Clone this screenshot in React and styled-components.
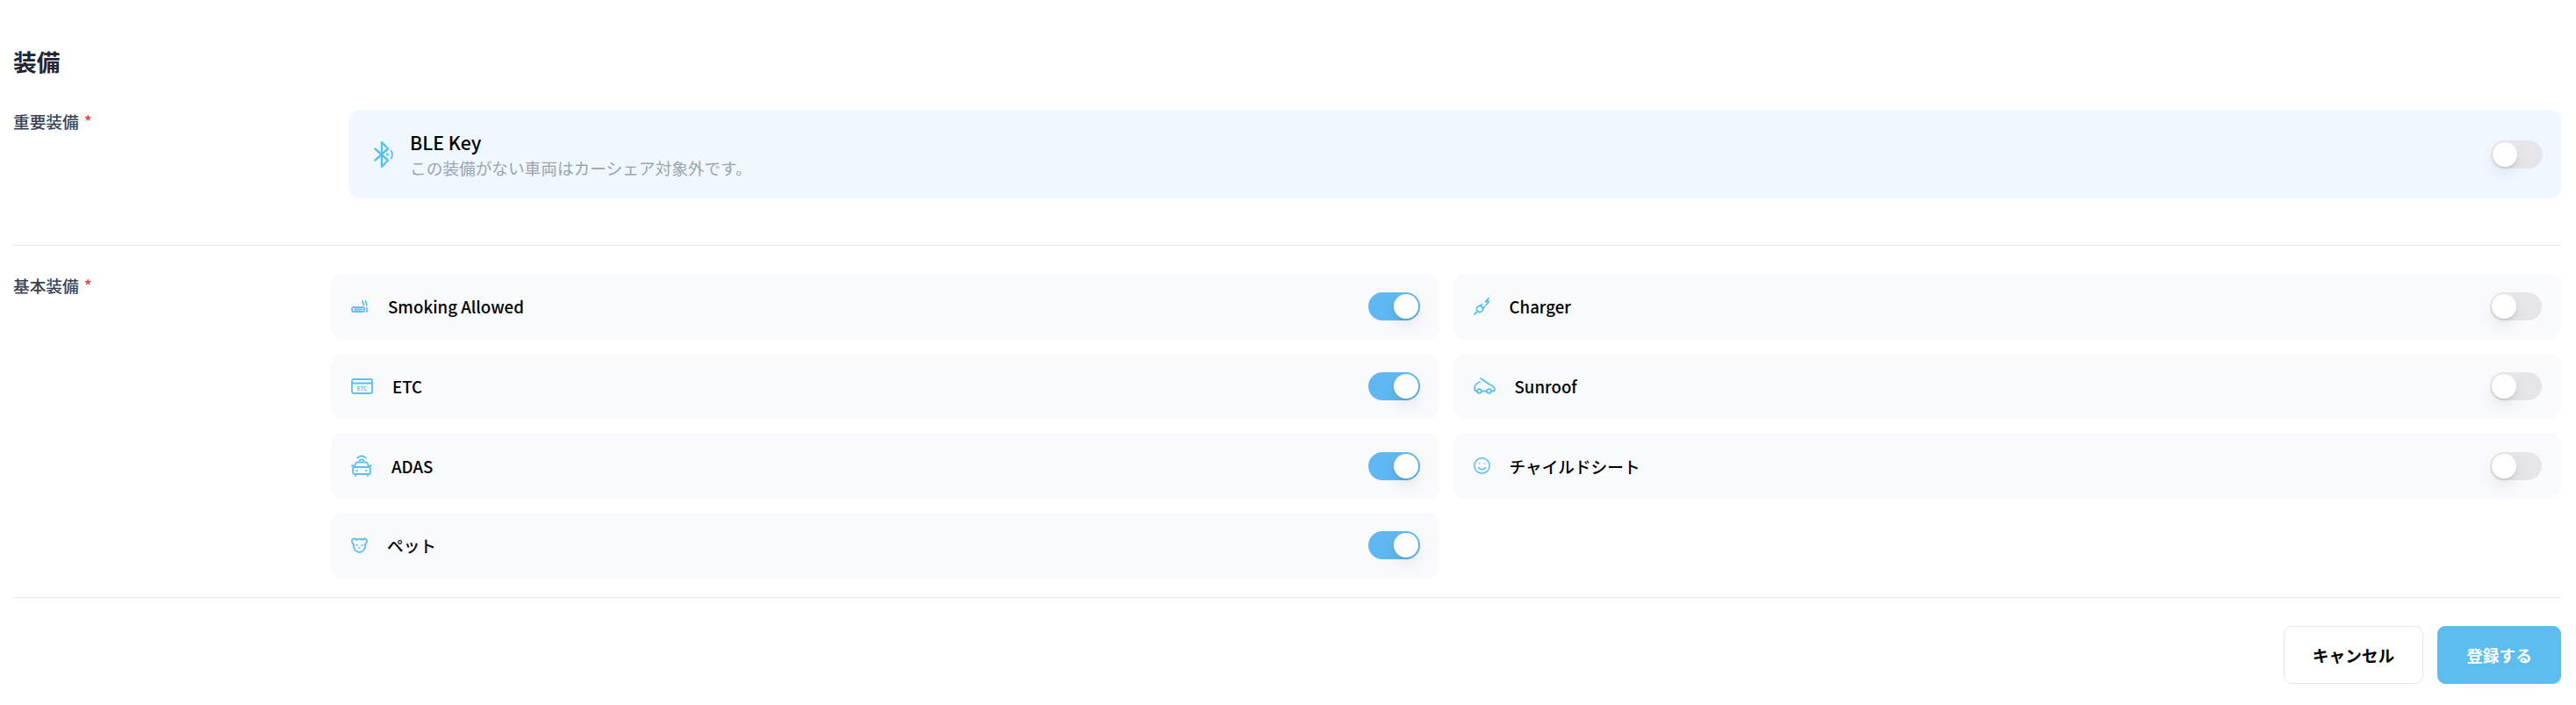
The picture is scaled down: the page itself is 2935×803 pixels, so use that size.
import React from "react";
import styled, { createGlobalStyle } from "styled-components";

const GlobalStyle = createGlobalStyle`
  body {
    margin: 0;
    background: #fff;
    font-family: "Noto Sans CJK JP", "Noto Sans", sans-serif;
    color: #000;
  }
`;

const Page = styled.div`
  padding: 50px 17px 24px 15px;
`;

const Title = styled.h2`
  margin: 0 0 36px;
  font-size: 26.67px;
  line-height: 39px;
  font-weight: 700;
  color: #1f2533;
`;

const FieldRow = styled.section`
  display: grid;
  grid-template-columns: 362px 1fr;
  padding: ${props => props.$pad};
  border-bottom: 1px solid #e7e7eb;
`;

const FieldLabel = styled.div`
  font-size: 18.67px;
  line-height: 26px;
  font-weight: 500;
  color: #374151;
`;

const Required = styled.span`
  color: #e0484d;
  margin-left: 6px;
`;

const KeyCard = styled.div`
  display: flex;
  align-items: center;
  height: 101px;
  margin-left: 20px;
  padding: 0 21px 0 29px;
  border-radius: 14px;
  background: #eff8fe;
`;

const KeyText = styled.div`
  flex: 1;
  margin-left: 18px;
`;

const KeyName = styled.div`
  font-size: 21.33px;
  line-height: 30px;
  font-weight: 500;
`;

const KeyNote = styled.div`
  font-size: 18.67px;
  line-height: 28px;
  color: #9ca3af;
`;

const ItemGrid = styled.div`
  display: grid;
  grid-template-columns: 1fr 1fr;
  grid-auto-rows: 74.67px;
  gap: 16px;
`;

const ItemCard = styled.div`
  display: flex;
  align-items: center;
  padding: 0 22px 0 23px;
  border-radius: 14px;
  background: #f9fafb;
`;

const ItemName = styled.span`
  flex: 1;
  margin-left: 22px;
  font-size: 18.67px;
  line-height: 28px;
  font-weight: 500;
`;

const Track = styled.div`
  display: flex;
  justify-content: ${props => (props.$on ? "flex-end" : "flex-start")};
  flex: none;
  width: 58.67px;
  height: 32px;
  padding: 2px;
  box-sizing: border-box;
  border-radius: 16px;
  background: ${props => (props.$on ? "#5fb8f1" : "#e5e5ea")};
`;

const Knob = styled.div`
  width: 28px;
  height: 28px;
  border-radius: 50%;
  background: #fff;
  box-shadow: 0 8px 16px rgba(0, 0, 0, 0.08), 0 2px 3px rgba(0, 0, 0, 0.08);
`;

const Footer = styled.footer`
  display: flex;
  justify-content: flex-end;
  gap: 16px;
  padding-top: 32px;
`;

const Button = styled.button`
  width: ${props => props.$width}px;
  height: 66px;
  box-sizing: border-box;
  border: 1px solid ${props => (props.$primary ? "#5bbeef" : "#e7e7eb")};
  border-radius: 9px;
  background: ${props => (props.$primary ? "#5bbeef" : "#fff")};
  color: ${props => (props.$primary ? "#fff" : "#000")};
  font-family: inherit;
  font-size: 18.67px;
  font-weight: 700;
`;

const IconSvg = styled.svg`
  flex: none;
  fill: none;
  stroke: #5bbfef;
  stroke-width: ${props => props.$stroke || 1.8};
  stroke-linecap: round;
  stroke-linejoin: round;
`;

const EtcMark = styled.text`
  fill: #5bbfef;
  stroke: none;
  font-size: 6.5px;
  font-weight: 700;
`;

const Bluetooth = () => (
  <IconSvg width="23" height="30" viewBox="0 0 23 30" $stroke={2.4}>
    <path d="M1.5 8.5L16 21.5 9 29V1l7 7.5L1.5 21.5" />
    <path d="M19.5 10.5c2 2.5 2 6.5 0 9" strokeWidth="1.8" />
    <circle cx="15.5" cy="15" r="0.5" />
  </IconSvg>
);

const Smoking = () => (
  <IconSvg width="20" height="14" viewBox="0 0 20 14">
    <rect x="1" y="8" width="14" height="5" rx="2" />
    <path d="M4 10.5h8M17.5 8.5c1.3 1 1.3 3.5 0 4.5M13 1l1.5 4.5M16.5 1L18 5.5" />
  </IconSvg>
);

const Etc = () => (
  <IconSvg width="25" height="18" viewBox="0 0 25 18">
    <rect x="1" y="1" width="23" height="16" rx="2" />
    <path d="M1 5.5h23" />
    <EtcMark x="12.5" y="14.3" textAnchor="middle">ETC</EtcMark>
  </IconSvg>
);

const Adas = () => (
  <IconSvg width="24" height="25" viewBox="0 0 24 25">
    <path d="M7.5 3.5c2.800-2.800 6.200-2.800 9 0M9.500 6.500c1.500-1.300 3.500-1.300 5 0" />
    <path d="M3.500 14l2-4.500c.3-.6.8-1 1.500-1h10c.7 0 1.200.4 1.500 1l2 4.500" />
    <rect x="2" y="14" width="20" height="8" rx="2" />
    <path d="M5 22v2M19 22v2M1 12.500h2M21 12.500h2M6.500 18h.5M17 18h.5" />
  </IconSvg>
);

const Pet = () => (
  <IconSvg width="19" height="18" viewBox="0 0 19 18" $stroke={1.8}>
    <path d="M6 2.700C8 1.900 11 1.900 13 2.700" />
    <path d="M6 2.700C4 .7 1 1.200 1 4c0 2 1 3.800 2 4.500" />
    <path d="M13 2.700C15 .7 18 1.200 18 4c0 2-1 3.800-2 4.500" />
    <path d="M2.800 8C2.500 13.500 5.500 17 9.500 17s7-3.500 6.700-9" />
    <path d="M6.500 9h.1M12.500 9h.1M9.500 12h.1" strokeWidth="2.2" />
  </IconSvg>
);

const Charger = () => (
  <IconSvg width="19" height="20" viewBox="0 0 19 20" $stroke={1.8}>
    <path d="M1 19l3.500-3.500" />
    <circle cx="7" cy="13" r="3.500" />
    <path d="M7.500 9.500l2-2M10.500 12.500l2-2" />
    <path d="M17 1l-3.500 3.500h4L14 8.500" />
  </IconSvg>
);

const Sunroof = () => (
  <IconSvg width="25" height="19" viewBox="0 0 25 19">
    <path d="M8 1l9.500 6.500" />
    <path d="M4 15.500C2 15.500 1 14.500 1 12.500 1 9.500 3.500 6.500 7 5M9 15.500h6M20 15.500h2.500c1 0 1.500-.7 1.500-2 0-2.500-2.500-4.500-6.500-6" />
    <circle cx="6.500" cy="15.500" r="2.300" />
    <circle cx="17.500" cy="15.500" r="2.300" />
  </IconSvg>
);

const Smile = () => (
  <IconSvg width="19" height="19" viewBox="0 0 19 19" $stroke={1.5}>
    <circle cx="9.500" cy="9.500" r="8.700" />
    <path d="M5.500 11.500c2 3 6 3 8 0M6.500 7h.1M12.500 7h.1" />
  </IconSvg>
);

const items = [
  { name: "Smoking Allowed", Icon: Smoking, on: true },
  { name: "Charger", Icon: Charger, on: false },
  { name: "ETC", Icon: Etc, on: true },
  { name: "Sunroof", Icon: Sunroof, on: false },
  { name: "ADAS", Icon: Adas, on: true },
  { name: "チャイルドシート", Icon: Smile, on: false },
  { name: "ペット", Icon: Pet, on: true },
];

function Toggle({ on }) {
  return (
    <Track $on={on}>
      <Knob />
    </Track>
  );
}

export default function App() {
  return (
    <Page>
      <GlobalStyle />
      <Title>装備</Title>
      <FieldRow $pad="0 0 53px">
        <FieldLabel>重要装備<Required>*</Required></FieldLabel>
        <KeyCard>
          <Bluetooth />
          <KeyText>
            <KeyName>BLE Key</KeyName>
            <KeyNote>この装備がない車両はカーシェア対象外です。</KeyNote>
          </KeyText>
          <Toggle on={false} />
        </KeyCard>
      </FieldRow>
      <FieldRow $pad="32px 0 21px">
        <FieldLabel>基本装備<Required>*</Required></FieldLabel>
        <ItemGrid>
          {items.map(({ name, Icon, on }) => (
            <ItemCard key={name}>
              <Icon />
              <ItemName>{name}</ItemName>
              <Toggle on={on} />
            </ItemCard>
          ))}
        </ItemGrid>
      </FieldRow>
      <Footer>
        <Button $width={159}>キャンセル</Button>
        <Button $primary $width={141}>登録する</Button>
      </Footer>
    </Page>
  );
}
